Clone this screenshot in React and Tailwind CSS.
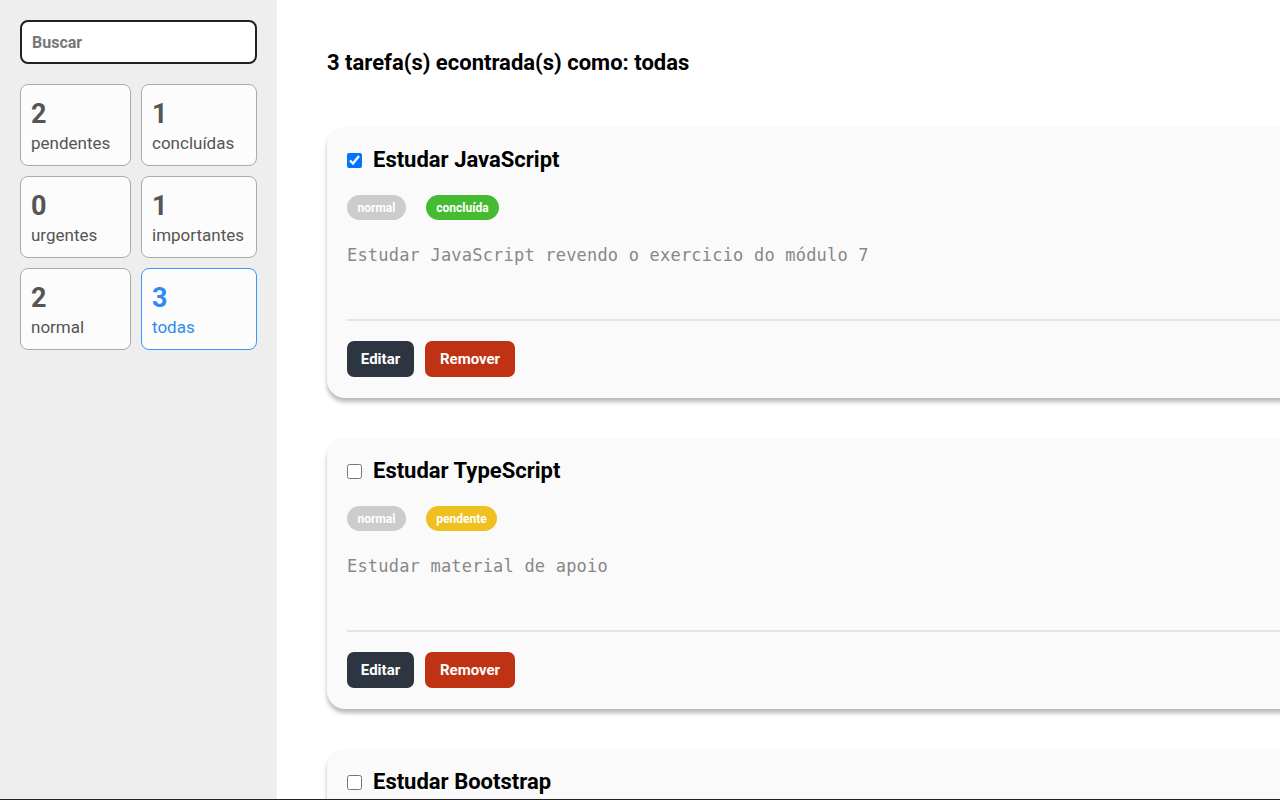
import React from "react";

const stats = [
  { n: 2, label: "pendentes" },
  { n: 1, label: "concluídas" },
  { n: 0, label: "urgentes" },
  { n: 1, label: "importantes" },
  { n: 2, label: "normal" },
  { n: 3, label: "todas", active: true },
];

const tasks = [
  {
    title: "Estudar JavaScript",
    done: true,
    status: "concluída",
    desc: "Estudar JavaScript revendo o exercicio do módulo 7",
  },
  {
    title: "Estudar TypeScript",
    done: false,
    status: "pendente",
    desc: "Estudar material de apoio",
  },
  {
    title: "Estudar Bootstrap",
    done: false,
    status: "pendente",
    desc: "Estudar Bootstrap",
  },
];

function Task({ t }) {
  return (
    <div className="w-[1100px] shrink-0 bg-[#fafafa] rounded-[18px] shadow-[0_4px_4px_rgba(0,0,0,0.28)] px-5 pt-5 pb-[21px] flex flex-col">
      <div className="flex items-center h-[26px] gap-[11px]">
        <input
          type="checkbox"
          defaultChecked={t.done}
          className="w-[15px] h-[15px] m-0"
        />
        <span className="text-[22px] font-bold text-black leading-[26px]">{t.title}</span>
      </div>
      <div className="flex gap-5 mt-[22px]">
        <span className="h-[25px] w-[59px] rounded-full bg-[#cccccc] text-white text-[12px] font-bold flex items-center justify-center">
          normal
        </span>
        <span
          className={
            "h-[25px] rounded-full text-white text-[12px] font-bold flex items-center justify-center " +
            (t.done ? "w-[73px] bg-[#44bb33]" : "w-[71px] bg-[#f0c020]")
          }
        >
          {t.status}
        </span>
      </div>
      <p
        className="mt-[23px] h-[76px] text-[17px] leading-[24px] tracking-[0.2px] text-[#888888]"
        style={{ fontFamily: '"DejaVu Sans Mono", "Liberation Mono", monospace' }}
      >
        {t.desc}
      </p>
      <div className="h-[2px] bg-[#e4e4e4]" />
      <div className="flex gap-[11px] mt-5">
        <button className="h-[36px] w-[67px] rounded-[7px] bg-[#2d3540] text-white text-[15px] font-bold">
          Editar
        </button>
        <button className="h-[36px] w-[90px] rounded-[7px] bg-[#c03214] text-white text-[15px] font-bold">
          Remover
        </button>
      </div>
    </div>
  );
}

export default function App() {
  return (
    <div
      className="flex w-[1280px] h-[800px] overflow-hidden bg-white relative"
      style={{ fontFamily: 'Roboto, "Noto Sans", sans-serif' }}
    >
      <aside className="w-[277px] shrink-0 bg-[#eeeeee] px-5 pt-5 flex flex-col">
        <input
          placeholder="Buscar"
          className="h-[44px] w-[237px] rounded-[8px] border-2 border-[#222222] bg-white px-[10px] text-[16px] font-bold placeholder:text-[#777777] outline-none"
        />
        <div className="grid grid-cols-[111px_116px] gap-x-[10px] gap-y-[10px] mt-5">
          {stats.map((s) => (
            <div
              key={s.label}
              className={
                "h-[82px] rounded-[8px] border-[1.5px] bg-[#fcfcfc] pl-[10px] pt-[14px] flex flex-col " +
                (s.active ? "border-[#3399ff] text-[#2d8cf0]" : "border-[#aaaaaa] text-[#555555]")
              }
            >
              <span className="text-[27px] font-bold leading-[30px]">{s.n}</span>
              <span className="text-[17px] leading-[22px] mt-[3px]">{s.label}</span>
            </div>
          ))}
        </div>
      </aside>
      <main className="flex-1 pl-[50px] pt-[50px] flex flex-col overflow-hidden">
        <h1 className="text-[22px] font-bold text-black leading-[26px]">
          3 tarefa(s) econtrada(s) como: todas
        </h1>
        <div className="flex flex-col gap-10 mt-[51px]">
          {tasks.map((t) => (
            <Task key={t.title} t={t} />
          ))}
        </div>
      </main>
      <div className="absolute left-0 right-0 bottom-0 h-[1px] bg-[#222222]" />
    </div>
  );
}
